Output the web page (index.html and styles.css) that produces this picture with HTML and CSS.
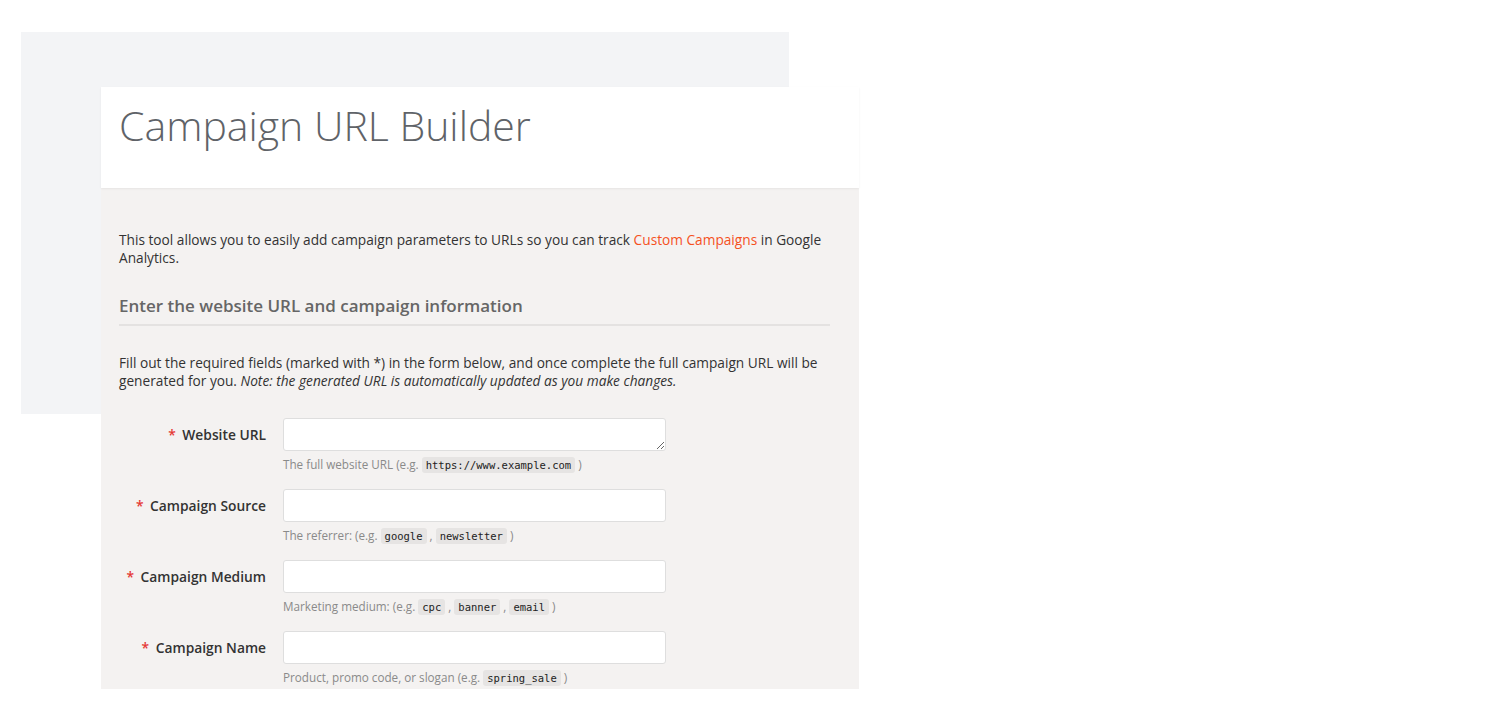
FILE: index.html
```html
<!DOCTYPE html>
<html lang="en">
<head>
<meta charset="utf-8">
<title>Campaign URL Builder</title>
<link rel="stylesheet" href="styles.css">
</head>
<body>
<div class="stage">
  <div class="backdrop"></div>
  <div class="card">
    <header class="card-header">
      <h1 class="title">Campaign URL Builder</h1>
    </header>
    <section class="card-body">
      <p class="intro">This tool allows you to easily add campaign parameters to URLs so you can track <a class="link" href="#">Custom Campaigns</a> in Google Analytics.</p>
      <h2 class="section-title">Enter the website URL and campaign information</h2>
      <p class="instructions">Fill out the required fields (marked with *) in the form below, and once complete the full campaign URL will be generated for you. <em>Note: the generated URL is automatically updated as you make changes.</em></p>
      <form class="form">
        <div class="row">
          <label class="label"><span class="req">*</span> Website URL</label>
          <div class="field">
            <textarea class="input textarea" rows="1"></textarea>
            <div class="help">The full website URL (e.g. <code class="chip">https://www.example.com</code> )</div>
          </div>
        </div>
        <div class="row">
          <label class="label"><span class="req">*</span> Campaign Source</label>
          <div class="field">
            <input class="input" type="text">
            <div class="help">The referrer: (e.g. <code class="chip">google</code> , <code class="chip">newsletter</code> )</div>
          </div>
        </div>
        <div class="row">
          <label class="label"><span class="req">*</span> Campaign Medium</label>
          <div class="field">
            <input class="input" type="text">
            <div class="help">Marketing medium: (e.g. <code class="chip">cpc</code> , <code class="chip">banner</code> , <code class="chip">email</code> )</div>
          </div>
        </div>
        <div class="row">
          <label class="label"><span class="req">*</span> Campaign Name</label>
          <div class="field">
            <input class="input" type="text">
            <div class="help">Product, promo code, or slogan (e.g. <code class="chip">spring_sale</code> )</div>
          </div>
        </div>
      </form>
    </section>
  </div>
</div>
</body>
</html>
```
FILE: styles.css
```css
html, body {
  margin: 0;
  padding: 0;
  background: #ffffff;
}
body {
  font-family: "Open Sans", "Liberation Sans", sans-serif;
  color: #333333;
  height: 718px;
  overflow: hidden;
}
.stage {
  display: grid;
  grid-template-columns: max-content;
}
.backdrop {
  grid-area: 1 / 1;
  margin: 32px 0 0 21px;
  width: 768px;
  height: 382px;
  background: #f3f4f6;
}
.card {
  grid-area: 1 / 1;
  margin: 87px 0 0 101px;
  width: 758px;
  position: relative;
}
.card-header {
  background: #ffffff;
  height: 101px;
  padding: 0 18px;
  box-sizing: border-box;
  box-shadow: 0 1px 2px rgba(0,0,0,0.06);
  position: relative;
  z-index: 1;
}
.title {
  margin: 0;
  padding-top: 12px;
  font-family: "Open Sans", sans-serif;
  font-weight: 300;
  font-size: 41px;
  line-height: 52px;
  color: #5f6368;
  letter-spacing: 0;
}
.card-body {
  background: #f4f2f1;
  height: 501px;
  padding: 43px 29px 0 18px;
  box-sizing: border-box;
  overflow: hidden;
}
.intro, .instructions {
  margin: 0;
  font-size: 13.7px;
  line-height: 18px;
  color: #333333;
}
.link {
  color: #f4511e;
  text-decoration: none;
}
.section-title {
  margin: 27px 0 0;
  font-size: 17px;
  font-weight: 600;
  line-height: 24px;
  color: #666666;
  padding-bottom: 6px;
  border-bottom: 2px solid #e4e2e1;
}
.instructions {
  margin-top: 28px;
}
.instructions em {
  font-style: italic;
}
.form {
  margin-top: 28px;
  display: flex;
  flex-direction: column;
  gap: 16px;
}
.row {
  display: flex;
  align-items: flex-start;
  gap: 17px;
}
.label {
  width: 147px;
  flex: none;
  text-align: right;
  font-size: 13.8px;
  font-weight: 600;
  line-height: 33px;
  color: #333333;
}
.req {
  color: #e53935;
  margin-right: 3px;
}
.field {
  width: 383px;
}
.input {
  display: block;
  width: 383px;
  height: 33px;
  box-sizing: border-box;
  border: 1px solid #dedede;
  border-radius: 3px;
  background: #ffffff;
  margin: 0;
  padding: 6px 8px;
  font-family: "Open Sans", sans-serif;
  font-size: 13px;
  outline: none;
}
.textarea {
  resize: vertical;
}
.help {
  margin-top: 4px;
  font-size: 11.7px;
  line-height: 18px;
  height: 18px;
  color: #8a8a8a;
  white-space: nowrap;
}
.chip {
  font-family: "DejaVu Sans Mono", "Liberation Mono", monospace;
  font-size: 10.5px;
  font-weight: normal;
  color: #222222;
  background: #e6e4e3;
  border-radius: 3px;
  padding: 2px 4px;
}
```
